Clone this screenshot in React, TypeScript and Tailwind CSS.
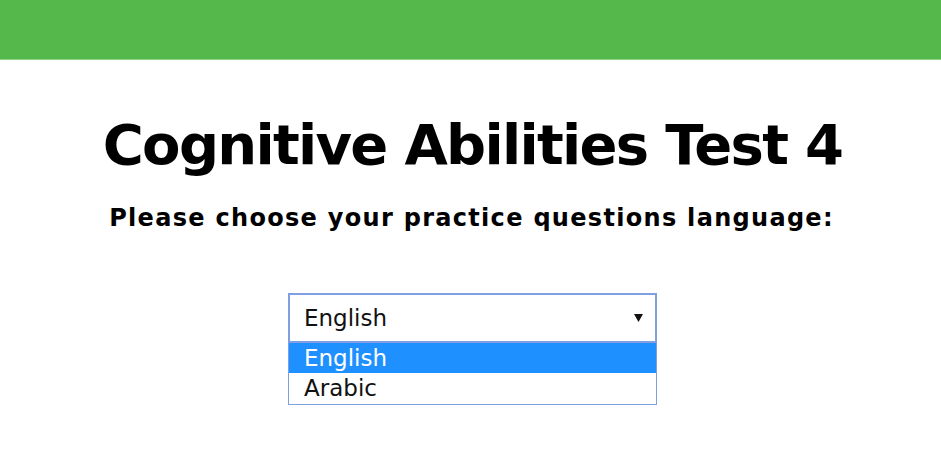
import React from "react";

export default function App() {
  return (
    <div className="w-[941px] h-[467px] bg-white overflow-hidden" style={{ fontFamily: '"DejaVu Sans", Verdana, sans-serif' }}>
      <div className="h-[60px] bg-[#55b84a] border-b border-[#8fd485]" />
      <div className="flex flex-col items-center">
        <h1 className="mt-[53px] ml-[4px] text-[56px] leading-[64px] font-bold text-black tracking-[-1.7px]">Cognitive Abilities Test 4</h1>
        <p className="mt-[26px] ml-[2px] text-[24px] leading-[30px] font-bold text-black tracking-[1.3px]">Please choose your practice questions language:</p>
        <div className="mt-[60px] ml-[4px] w-[369px] flex flex-col">
          <div className="h-[50px] border-2 border-[#7f9fe0] flex items-center justify-between pl-[14px] pr-[12px] text-[23px] text-[#111]">
            <span>English</span>
            <svg width="9" height="8" viewBox="0 0 9 8"><path d="M0 0 L9 0 L4.5 8 Z" fill="#111" /></svg>
          </div>
          <div className="border border-[#7f9fe0] border-t-0 text-[23px] leading-[30px]">
            <div className="bg-[#1e90ff] text-white pl-[15px]">English</div>
            <div className="text-[#111] pl-[15px] h-[31px]">Arabic</div>
          </div>
        </div>
      </div>
    </div>
  );
}
